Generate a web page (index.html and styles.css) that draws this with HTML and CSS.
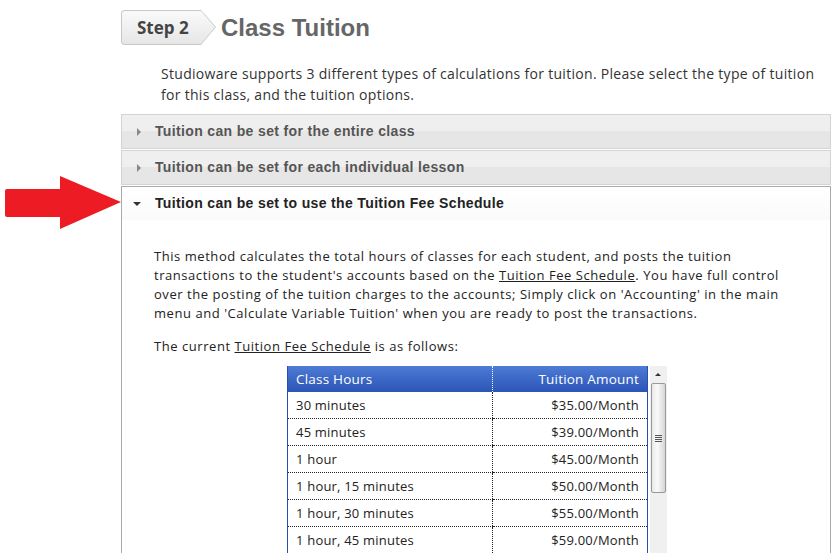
FILE: index.html
```html
<!DOCTYPE html>
<html lang="en">
<head>
    <meta charset="UTF-8">
    <title>Class Tuition</title>
    <link rel="stylesheet" href="styles.css">
</head>
<body>
    <svg class="pointer" width="122" height="56" viewBox="0 0 122 56">
        <rect x="5" y="13" width="60" height="28" rx="2" fill="#ed1c24"/>
        <polygon points="60,0 121,26 60,53" fill="#ed1c24"/>
    </svg>
    <div class="page">
        <div class="title-row">
            <div class="step"><div class="step-inner">Step 2</div></div>
            <h1>Class Tuition</h1>
        </div>
        <p class="intro">Studioware supports 3 different types of calculations for tuition. Please select the type of tuition for this class, and the tuition options.</p>

        <div class="accordion">
            <div class="acc-head"><span class="tri right"></span>Tuition can be set for the entire class</div>
            <div class="acc-head"><span class="tri right"></span>Tuition can be set for each individual lesson</div>
            <div class="acc-head active"><span class="tri down"></span>Tuition can be set to use the Tuition Fee Schedule</div>
            <div class="acc-body">
                <p>This method calculates the total hours of classes for each student, and posts the tuition transactions to the student's accounts based on the <a href="#">Tuition Fee Schedule</a>. You have full control over the posting of the tuition charges to the accounts; Simply click on 'Accounting' in the main menu and 'Calculate Variable Tuition' when you are ready to post the transactions.</p>
                <p class="lead-in">The current <a href="#">Tuition Fee Schedule</a> is as follows:</p>
                <div class="schedule">
                    <div class="table-wrap">
                        <table>
                            <tr><th>Class Hours</th><th class="amt">Tuition Amount</th></tr>
                            <tr><td>30 minutes</td><td class="amt">$35.00/Month</td></tr>
                            <tr><td>45 minutes</td><td class="amt">$39.00/Month</td></tr>
                            <tr><td>1 hour</td><td class="amt">$45.00/Month</td></tr>
                            <tr><td>1 hour, 15 minutes</td><td class="amt">$50.00/Month</td></tr>
                            <tr><td>1 hour, 30 minutes</td><td class="amt">$55.00/Month</td></tr>
                            <tr><td>1 hour, 45 minutes</td><td class="amt">$59.00/Month</td></tr>
                            <tr><td>2 hours</td><td class="amt">$64.00/Month</td></tr>
                            <tr><td>2 hours, 30 minutes</td><td class="amt">$72.00/Month</td></tr>
                        </table>
                    </div>
                    <div class="scrollbar">
                        <div class="sb-up"></div>
                        <div class="sb-thumb"><span class="grip"></span></div>
                    </div>
                </div>
            </div>
        </div>
    </div>
</body>
</html>
```

FILE: styles.css
```css
html, body {
    overflow: hidden;
}
body {
    margin: 0;
    font-family: "Open Sans", "DejaVu Sans", sans-serif;
    color: #222;
    background: #fff;
}
.pointer {
    position: absolute;
    left: 0;
    top: 176px;
}
.page {
    width: 710px;
    margin-left: 121px;
    padding-top: 10px;
}
.title-row {
    display: flex;
    align-items: center;
    gap: 5px;
}
.step {
    width: 95px;
    height: 35px;
    background: #c8c8c8;
    clip-path: polygon(0 0, 80px 0, 95px 17px, 80px 35px, 0 35px);
    border-radius: 4px 0 0 4px;
}
.step-inner {
    height: 33px;
    margin: 1px;
    padding-left: 15px;
    box-sizing: border-box;
    background: linear-gradient(#fafafa, #e6e6e6);
    clip-path: polygon(0 0, 79px 0, 93px 16px, 79px 33px, 0 33px);
    border-radius: 3px 0 0 3px;
    font-family: "Open Sans", sans-serif;
    font-weight: bold;
    font-size: 17px;
    line-height: 33px;
    color: #444;
}
h1 {
    margin: 0;
    font-family: "Liberation Sans", Arial, sans-serif;
    font-size: 24px;
    color: #666;
}
.intro {
    margin: 18px 0 0 40px;
    width: 660px;
    font-size: 14px;
    letter-spacing: 0.3px;
    line-height: 21px;
    color: #333;
}
.accordion {
    margin-top: 9px;
}
.acc-head {
    height: 33px;
    margin-bottom: 1px;
    border: 1px solid #d3d3d3;
    background: linear-gradient(#efefef 50%, #e6e6e6 50%);
    font-family: "Liberation Sans", Arial, sans-serif;
    font-weight: bold;
    font-size: 14px;
    letter-spacing: 0.35px;
    line-height: 33px;
    color: #555;
    display: flex;
    align-items: center;
}
.acc-head.active {
    margin-top: 1px;
    background: linear-gradient(#fff, #fafafa);
    border-color: #aaa;
    border-bottom: none;
    margin-bottom: 0;
    color: #222;
}
.tri {
    width: 0;
    height: 0;
}
.tri.right {
    border-top: 4px solid transparent;
    border-bottom: 4px solid transparent;
    border-left: 4px solid #888;
    margin-left: 15px;
    margin-right: 14px;
}
.tri.down {
    border-left: 4px solid transparent;
    border-right: 4px solid transparent;
    border-top: 4px solid #333;
    margin-left: 11px;
    margin-right: 14px;
}
.acc-body {
    border: 1px solid #aaa;
    border-top: none;
    padding: 27px 40px 0 32px;
    height: 400px;
}
.acc-body p {
    margin: 0 0 14px 0;
    font-size: 13px;
    letter-spacing: 0.55px;
    line-height: 19px;
    color: #222;
}
.acc-body p.lead-in {
    margin-bottom: 10px;
}
.acc-body a {
    color: #222;
}
.schedule {
    display: flex;
    margin-left: 133px;
    height: 300px;
}
.table-wrap {
    width: 359px;
    height: 300px;
    overflow: hidden;
    border-left: 1px solid #2a4fae;
    border-right: 1px solid #2a4fae;
}
table {
    width: 100%;
    border-collapse: collapse;
    font-size: 13px;
    letter-spacing: 0.2px;
}
th {
    height: 26px;
    padding: 0 8px;
    text-align: left;
    font-weight: normal;
    font-size: 13.5px;
    color: #fff;
    background: linear-gradient(#4d7bd5, #2c55b6);
    border-left: 1px dotted #fff;
}
td {
    height: 26px;
    padding: 0 8px;
    border-bottom: 1px dotted #222;
    border-left: 1px dotted #222;
}
th:first-child, td:first-child {
    border-left: none;
    width: 188px;
}
.amt {
    text-align: right;
}
.scrollbar {
    width: 17px;
    margin-left: 2px;
    background: #f0f0f0;
}
.sb-up {
    height: 17px;
    position: relative;
}
.sb-up::after {
    content: "";
    position: absolute;
    left: 5px;
    top: 7px;
    border-left: 3px solid transparent;
    border-right: 3px solid transparent;
    border-bottom: 3px solid #333;
}
.sb-thumb {
    height: 108px;
    margin: 0 1px;
    border: 1px solid #999;
    border-radius: 2px;
    background: linear-gradient(90deg, #e8e8e8, #fafafa 40%, #d6d6d6);
    display: flex;
    align-items: center;
    justify-content: center;
}
.grip {
    width: 7px;
    height: 7px;
    background: repeating-linear-gradient(#555 0 1px, transparent 1px 2px);
}
```
